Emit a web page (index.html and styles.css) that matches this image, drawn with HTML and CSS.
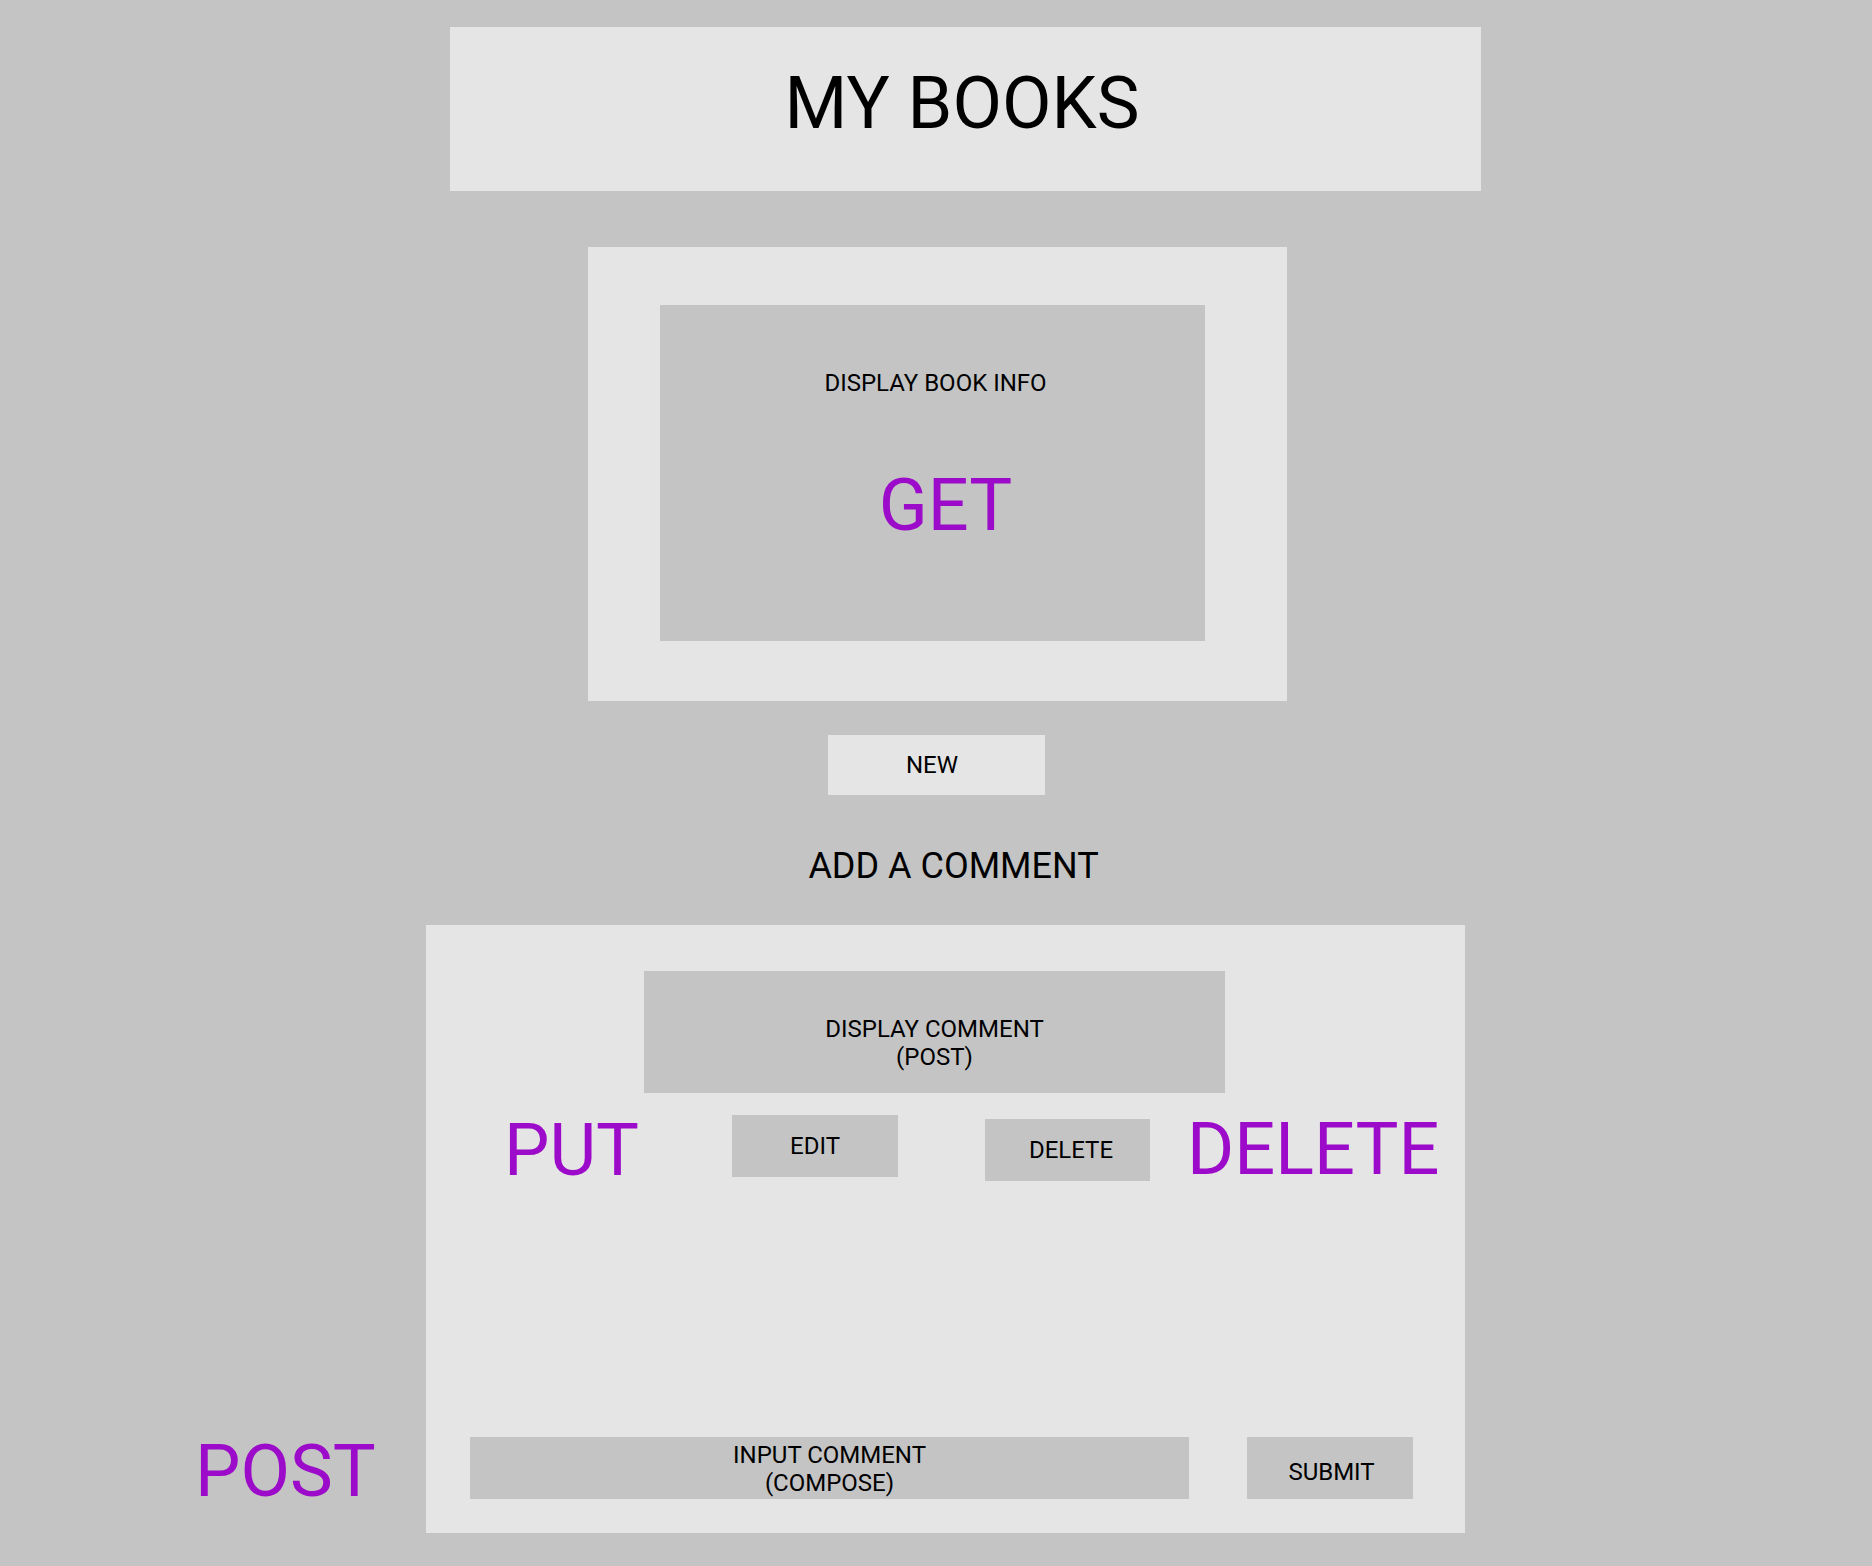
FILE: index.html
```html
<!DOCTYPE html>
<html lang="en">
<head>
<meta charset="utf-8">
<title>My Books</title>
<link rel="stylesheet" href="styles.css">
</head>
<body>
<div class="page">
  <header class="header">
    <h1 class="header-title">MY BOOKS</h1>
  </header>

  <section class="book-card">
    <div class="book-display">
      <div class="book-label">DISPLAY BOOK INFO</div>
      <div class="method method-get">GET</div>
    </div>
  </section>

  <button class="btn-new">NEW</button>

  <h2 class="add-title">ADD A COMMENT</h2>

  <div class="comment-row">
    <div class="post-side">
      <span class="method">POST</span>
    </div>
    <section class="comment-box">
      <div class="comment-display">DISPLAY COMMENT<br>(POST)</div>
      <div class="action-row">
        <span class="method method-put">PUT</span>
        <button class="btn-grey btn-edit">EDIT</button>
        <button class="btn-grey btn-delete">DELETE</button>
        <span class="method method-delete">DELETE</span>
      </div>
      <div class="compose-row">
        <div class="compose-input">INPUT COMMENT<br>(COMPOSE)</div>
        <button class="btn-grey btn-submit">SUBMIT</button>
      </div>
    </section>
  </div>
</div>
</body>
</html>
```

FILE: styles.css
```css
* {
  box-sizing: border-box;
}

html, body {
  margin: 0;
  padding: 0;
  background: #c4c4c4;
}

body {
  font-family: Roboto, "Liberation Sans", Arial, sans-serif;
  color: #000;
  width: 1872px;
  height: 1566px;
  overflow: hidden;
}

.page {
  padding-top: 27px;
}

button {
  font-family: inherit;
  border: none;
  padding: 0;
  margin: 0;
  color: #000;
  cursor: pointer;
}

/* Header */
.header {
  margin-left: 450px;
  width: 1031px;
  height: 164px;
  background: #e5e5e5;
  padding-top: 35px;
  padding-right: 7px;
}

.header-title {
  margin: 0;
  font-size: 72px;
  font-weight: 400;
  line-height: 84px;
  text-align: center;
}

/* Book card */
.book-card {
  margin-top: 56px;
  margin-left: 588px;
  width: 699px;
  height: 454px;
  background: #e5e5e5;
  padding: 58px 0 0 72px;
}

.book-display {
  width: 545px;
  height: 336px;
  background: #c4c4c4;
  padding-top: 64px;
}

.book-label {
  font-size: 24px;
  line-height: 28px;
  text-align: center;
  padding-left: 6px;
}

.method {
  font-size: 72px;
  line-height: 84px;
  color: #9c0bc9;
  white-space: nowrap;
}

.method-get {
  display: block;
  margin-top: 67px;
  text-align: center;
  padding-left: 26px;
}

/* New button */
.btn-new {
  display: flex;
  align-items: center;
  justify-content: center;
  margin-top: 34px;
  margin-left: 828px;
  width: 217px;
  height: 60px;
  background: #e5e5e5;
  font-size: 24px;
  line-height: 28px;
  padding-right: 9px;
}

.add-title {
  margin: 50px 0 0 0;
  width: 1907px;
  font-size: 36px;
  font-weight: 400;
  line-height: 42px;
  text-align: center;
}

/* Comment section */
.comment-row {
  margin-top: 38px;
  display: flex;
}

.post-side {
  width: 426px;
  display: flex;
  align-items: flex-end;
  padding-left: 195px;
  padding-bottom: 19px;
}

.comment-box {
  width: 1039px;
  height: 608px;
  background: #e5e5e5;
  display: flex;
  flex-direction: column;
  padding: 46px 0 34px 0;
}

.comment-display {
  margin-left: 218px;
  width: 581px;
  height: 122px;
  background: #c4c4c4;
  font-size: 24px;
  line-height: 28px;
  text-align: center;
  padding-top: 44px;
}

.action-row {
  display: flex;
  align-items: flex-start;
  margin-top: 16px;
}

.method-put {
  margin-left: 78px;
  width: 136px;
}

.btn-grey {
  display: flex;
  align-items: center;
  justify-content: center;
  height: 62px;
  background: #c4c4c4;
  font-size: 24px;
  line-height: 28px;
}

.btn-edit {
  margin-top: 6px;
  margin-left: 92px;
  width: 166px;
}

.btn-delete {
  margin-top: 10px;
  margin-left: 87px;
  width: 165px;
  padding-left: 7px;
}

.method-delete {
  margin-left: 37px;
  margin-top: -1px;
}

.compose-row {
  margin-top: auto;
  display: flex;
  align-items: flex-start;
}

.compose-input {
  margin-left: 44px;
  width: 719px;
  height: 62px;
  background: #c4c4c4;
  font-size: 24px;
  line-height: 28px;
  text-align: center;
  padding-top: 4px;
}

.btn-submit {
  margin-left: 58px;
  width: 166px;
  padding-top: 8px;
  padding-left: 3px;
}
```
